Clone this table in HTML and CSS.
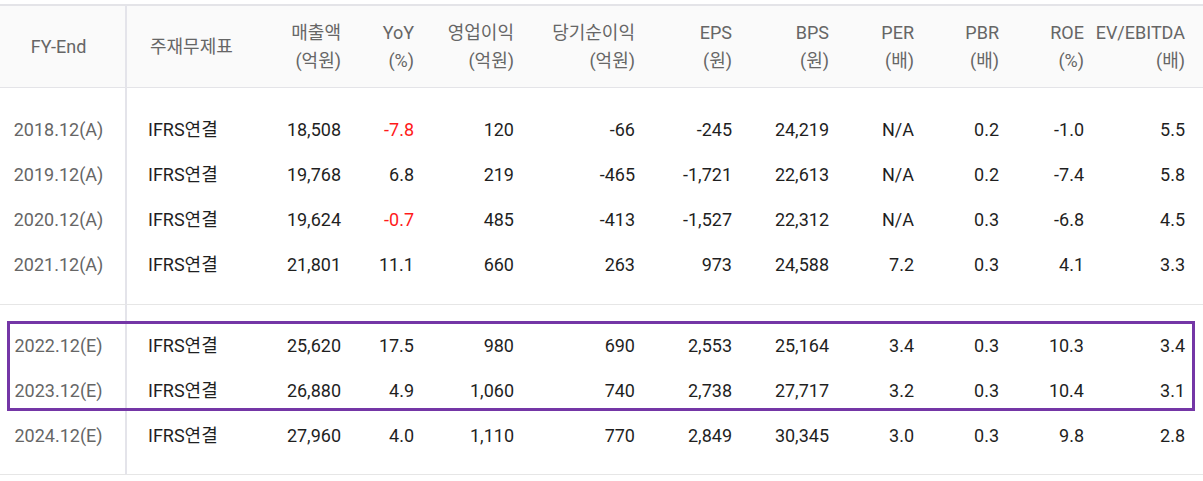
FILE: index.html
```html
<!DOCTYPE html>
<html lang="ko">
<head>
<meta charset="utf-8">
<title>재무 요약</title>
<link rel="stylesheet" href="styles.css">
</head>
<body>
<div class="wrap">
  <table class="fin">
    <colgroup>
      <col class="c-fy"><col class="c-type"><col class="c-sales"><col class="c-yoy"><col class="c-op"><col class="c-net"><col class="c-eps"><col class="c-bps"><col class="c-per"><col class="c-pbr"><col class="c-roe"><col class="c-ev">
    </colgroup>
    <thead>
      <tr>
        <th class="fy">FY-End</th>
        <th class="type">주재무제표</th>
        <th>매출액<br>(억원)</th>
        <th>YoY<br>(%)</th>
        <th>영업이익<br>(억원)</th>
        <th>당기순이익<br>(억원)</th>
        <th>EPS<br>(원)</th>
        <th>BPS<br>(원)</th>
        <th>PER<br>(배)</th>
        <th>PBR<br>(배)</th>
        <th>ROE<br>(%)</th>
        <th class="last">EV/EBITDA<br>(배)</th>
      </tr>
    </thead>
    <tbody>
      <tr class="sp sp-top"><td class="fy"></td><td colspan="11"></td></tr>
      <tr><td class="fy">2018.12(A)</td><td class="type">IFRS연결</td><td>18,508</td><td class="neg">-7.8</td><td>120</td><td>-66</td><td>-245</td><td>24,219</td><td>N/A</td><td>0.2</td><td>-1.0</td><td class="last">5.5</td></tr>
      <tr><td class="fy">2019.12(A)</td><td class="type">IFRS연결</td><td>19,768</td><td>6.8</td><td>219</td><td>-465</td><td>-1,721</td><td>22,613</td><td>N/A</td><td>0.2</td><td>-7.4</td><td class="last">5.8</td></tr>
      <tr><td class="fy">2020.12(A)</td><td class="type">IFRS연결</td><td>19,624</td><td class="neg">-0.7</td><td>485</td><td>-413</td><td>-1,527</td><td>22,312</td><td>N/A</td><td>0.3</td><td>-6.8</td><td class="last">4.5</td></tr>
      <tr><td class="fy">2021.12(A)</td><td class="type">IFRS연결</td><td>21,801</td><td>11.1</td><td>660</td><td>263</td><td>973</td><td>24,588</td><td>7.2</td><td>0.3</td><td>4.1</td><td class="last">3.3</td></tr>
      <tr class="sp sp-bot"><td class="fy"></td><td colspan="11"></td></tr>
    </tbody>
    <tbody>
      <tr class="sp sp-top2"><td class="fy"></td><td colspan="11"></td></tr>
      <tr><td class="fy">2022.12(E)</td><td class="type">IFRS연결</td><td>25,620</td><td>17.5</td><td>980</td><td>690</td><td>2,553</td><td>25,164</td><td>3.4</td><td>0.3</td><td>10.3</td><td class="last">3.4</td></tr>
      <tr><td class="fy">2023.12(E)</td><td class="type">IFRS연결</td><td>26,880</td><td>4.9</td><td>1,060</td><td>740</td><td>2,738</td><td>27,717</td><td>3.2</td><td>0.3</td><td>10.4</td><td class="last">3.1</td></tr>
      <tr><td class="fy">2024.12(E)</td><td class="type">IFRS연결</td><td>27,960</td><td>4.0</td><td>1,110</td><td>770</td><td>2,849</td><td>30,345</td><td>3.0</td><td>0.3</td><td>9.8</td><td class="last">2.8</td></tr>
      <tr class="sp sp-end"><td class="fy"></td><td colspan="11"></td></tr>
    </tbody>
  </table>
  <div class="highlight"></div>
</div>
</body>
</html>
```

FILE: styles.css
```css
html, body {
  margin: 0;
  padding: 0;
  background: #ffffff;
}

body {
  font-family: Roboto, "Noto Sans CJK KR", "Liberation Sans", sans-serif;
  font-size: 18px;
  color: #222222;
}

.wrap {
  position: relative;
  width: 1203px;
  padding-top: 4px;
}

.fin {
  width: 1203px;
  table-layout: fixed;
  border-collapse: separate;
  border-spacing: 0;
}

.c-fy { width: 127px; }
.c-type { width: 143px; }
.c-sales { width: 79px; }
.c-yoy { width: 73px; }
.c-op { width: 100px; }
.c-net { width: 121px; }
.c-eps { width: 97px; }
.c-bps { width: 97px; }
.c-per { width: 85px; }
.c-pbr { width: 85px; }
.c-roe { width: 85px; }
.c-ev { width: 111px; }

.fin th {
  background: #fafafa;
  border-top: 2px solid #e4e4e8;
  border-bottom: 1px solid #e4e4e8;
  font-weight: normal;
  color: #666666;
  text-align: right;
  padding: 13px 8px 12px 0;
  line-height: 28px;
  white-space: nowrap;
  vertical-align: middle;
}

.fin td {
  padding: 0 8px 0 0;
  height: 45px;
  line-height: 45px;
  text-align: right;
  white-space: nowrap;
  color: #1f1f1f;
}

.fin .fy {
  text-align: center;
  padding: 0 8px 0 0;
  border-right: 2px solid #e4e4ea;
  color: #666666;
}

.fin th.fy {
  padding: 13px 8px 12px 0;
}

.fin .type {
  text-align: left;
  padding-left: 21px;
}

.fin th.type {
  padding-left: 23px;
}

.fin .last {
  padding-right: 18px;
}

.fin td.neg {
  color: #ff1a1a;
}

.fin tr.sp td {
  height: auto;
  line-height: 0;
  padding: 0;
}

.fin tr.sp-top td { height: 19px; }
.fin tr.sp-bot td { height: 17px; }
.fin tr.sp-top2 td {
  height: 18px;
  border-top: 1px solid #e6e6e6;
}
.fin tr.sp-end td {
  height: 16px;
  border-bottom: 1px solid #e6e6e6;
}

.highlight {
  position: absolute;
  left: 7px;
  top: 321px;
  width: 1188px;
  height: 90px;
  box-sizing: border-box;
  border: 3px solid #7436a6;
  pointer-events: none;
}
```
